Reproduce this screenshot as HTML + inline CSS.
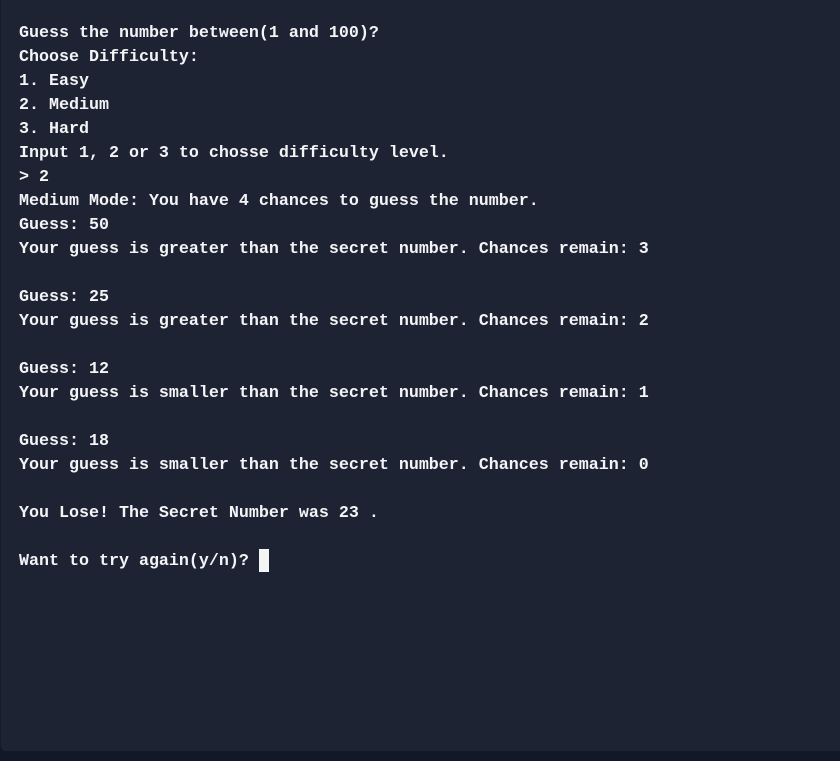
<!DOCTYPE html>
<html><head><style>
html,body{margin:0;padding:0;width:840px;height:761px;background:#111827;overflow:hidden}
.term{position:absolute;left:0;top:0;width:840px;height:751px;background:#1e2333;border-bottom-left-radius:5px;border-left:1px solid #151b29;box-sizing:border-box}
pre{position:absolute;left:19px;top:22px;margin:0;font-family:"Liberation Mono",monospace;font-size:16.67px;line-height:24px;font-weight:bold;color:#f3f4f6}
.cur{position:absolute;left:259px;top:549px;width:10px;height:23px;background:#f3f4f6}
</style></head><body><div class="term"></div><pre>Guess the number between(1 and 100)?
Choose Difficulty:
1. Easy
2. Medium
3. Hard
Input 1, 2 or 3 to chosse difficulty level.
&gt; 2
Medium Mode: You have 4 chances to guess the number.
Guess: 50
Your guess is greater than the secret number. Chances remain: 3

Guess: 25
Your guess is greater than the secret number. Chances remain: 2

Guess: 12
Your guess is smaller than the secret number. Chances remain: 1

Guess: 18
Your guess is smaller than the secret number. Chances remain: 0

You Lose! The Secret Number was 23 .

Want to try again(y/n)? </pre><div class="cur"></div></body></html>
